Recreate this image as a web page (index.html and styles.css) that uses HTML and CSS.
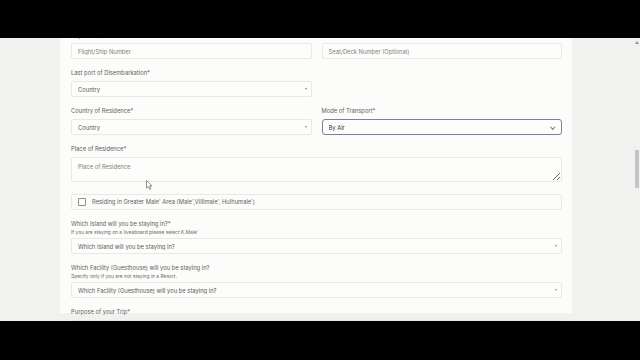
FILE: index.html
```html
<!DOCTYPE html>
<html lang="en">

<head>
    <meta charset="UTF-8">
    <meta name="viewport" content="width=device-width, initial-scale=1.0">
    <title>Traveller Declaration</title>
    <link rel="stylesheet" href="styles.css">
</head>

<body>
    <div class="frame">
        <div class="bar"></div>

        <div class="viewport">
            <div class="page">
                <div class="panel">
                    <form class="form">

                        <div class="group">
                            <label>Flight/Ship Number*</label>
                            <input type="text" placeholder="Flight/Ship Number">
                        </div>
                        <div class="group">
                            <label>Seat/Deck Number</label>
                            <input type="text" placeholder="Seat/Deck Number (Optional)">
                        </div>

                        <div class="group">
                            <label>Last port of Disembarkation*</label>
                            <div class="select-wrap">
                                <select><option>Country</option></select>
                            </div>
                        </div>
                        <div class="group"></div>

                        <div class="group">
                            <label>Country of Residence*</label>
                            <div class="select-wrap">
                                <select><option>Country</option></select>
                            </div>
                        </div>
                        <div class="group">
                            <label>Mode of Transport*</label>
                            <div class="select-wrap chevron">
                                <select class="focused"><option>By Air</option></select>
                            </div>
                        </div>

                        <div class="group full">
                            <label>Place of Residence*</label>
                            <textarea placeholder="Place of Residence"></textarea>
                        </div>

                        <div class="group full">
                            <div class="check-box">
                                <input type="checkbox" id="greater-male">
                                <label for="greater-male">Residing in Greater Male' Area (Male',Villimale', Hulhumale')</label>
                            </div>
                        </div>

                        <div class="group full">
                            <label>Which Island will you be staying in?*</label>
                            <small>If you are staying on a liveaboard please select K.Male'</small>
                            <div class="select-wrap">
                                <select><option>Which Island will you be staying in?</option></select>
                            </div>
                        </div>

                        <div class="group full">
                            <label>Which Facility (Guesthouse) will you be staying in?</label>
                            <small>Specify only if you are not staying in a Resort.</small>
                            <div class="select-wrap">
                                <select><option>Which Facility (Guesthouse) will you be staying in?</option></select>
                            </div>
                        </div>

                        <div class="group full">
                            <label>Purpose of your Trip*</label>
                            <div class="select-wrap">
                                <select><option>Purpose of your Trip</option></select>
                            </div>
                        </div>

                    </form>
                    <svg class="cursor" width="7" height="10" viewBox="0 0 7 10">
                        <path d="M0.5 0.5 L0.5 8 L2.3 6.4 L3.6 9.4 L4.8 8.9 L3.6 6 L6 6 Z" fill="#fff" stroke="#666" stroke-width="0.7" />
                    </svg>
                </div>
            </div>

            <div class="scrollbar">
                <span class="arrow"></span>
                <div class="thumb"></div>
            </div>
        </div>

        <div class="bar"></div>
    </div>
</body>

</html>
```

FILE: styles.css
```css
body {
    margin: 0;
    background: #000;
    font-family: Inter, "Noto Sans", sans-serif;
    color: #555;
}

.frame {
    display: flex;
    flex-direction: column;
    height: 360px;
}

.bar {
    height: 38px;
    background: #000;
}

.bar:last-child {
    flex: 1;
}

.viewport {
    height: 283px;
    display: flex;
    background: #f1f2f0;
    overflow: hidden;
}

.page {
    flex: 1;
}

.panel {
    position: relative;
    width: 491px;
    height: 100%;
    margin-left: 60px;
    padding: 0 10px 0 11px;
    background: #fcfcfa;
}

.form {
    display: grid;
    grid-template-columns: 1fr 1fr;
    column-gap: 10px;
    margin-top: -8px;
}

.group {
    display: flex;
    flex-direction: column;
    margin-bottom: 9px;
}

.full {
    grid-column: 1 / -1;
}

.group label {
    font-size: 5.8px;
    line-height: 10px;
    margin-bottom: 3px;
    color: #606060;
}

.group small {
    font-size: 4.9px;
    line-height: 6px;
    margin: -3px 0 3px;
    color: #6a6a6a;
}

input[type="text"],
select,
textarea {
    display: block;
    box-sizing: border-box;
    width: 100%;
    height: 16px;
    margin: 0;
    padding: 0 6px;
    border: 1px solid #e8e8e5;
    border-radius: 2px;
    background: #fdfdfb;
    font-family: inherit;
    font-size: 5.8px;
    color: #5a5a5a;
    outline: none;
}

input::placeholder,
textarea::placeholder {
    color: #808080;
}

select {
    appearance: none;
    -webkit-appearance: none;
}

.select-wrap {
    position: relative;
}

.select-wrap::after {
    content: "";
    position: absolute;
    right: 5px;
    top: 7px;
    border-left: 1.5px solid transparent;
    border-right: 1.5px solid transparent;
    border-top: 2px solid #8a8a8a;
}

.select-wrap.chevron::after {
    top: 5.5px;
    right: 8px;
    width: 2.5px;
    height: 2.5px;
    border: none;
    border-right: 1px solid #777;
    border-bottom: 1px solid #777;
    transform: rotate(45deg);
}

select.focused {
    border: 1px solid #7582a0;
    border-radius: 3px;
    color: #333;
    background: #fdfdfb;
}

textarea {
    height: 25px;
    padding: 5px 6px;
    resize: vertical;
}

.check-box {
    display: flex;
    align-items: center;
    height: 16px;
    margin-top: 3px;
    padding: 0 6px;
    box-sizing: border-box;
    border: 1px solid #e8e8e5;
    border-radius: 2px;
}

.check-box input {
    appearance: none;
    -webkit-appearance: none;
    width: 8px;
    height: 8px;
    margin: 0 6px 0 0;
    border: 1px solid #8a8a8a;
    border-radius: 1px;
    background: #fff;
}

.check-box label {
    margin: 0;
    font-size: 5.8px;
}

.cursor {
    position: absolute;
    left: 86px;
    top: 150px;
}

.scrollbar {
    position: relative;
    width: 8px;
}

.arrow {
    position: absolute;
    top: 3px;
    right: 1px;
    border-left: 2px solid transparent;
    border-right: 2px solid transparent;
    border-bottom: 3px solid #999;
}

.thumb {
    width: 4px;
    height: 38px;
    margin: 112px 0 0 3px;
    background: #c4c4c4;
}
```
